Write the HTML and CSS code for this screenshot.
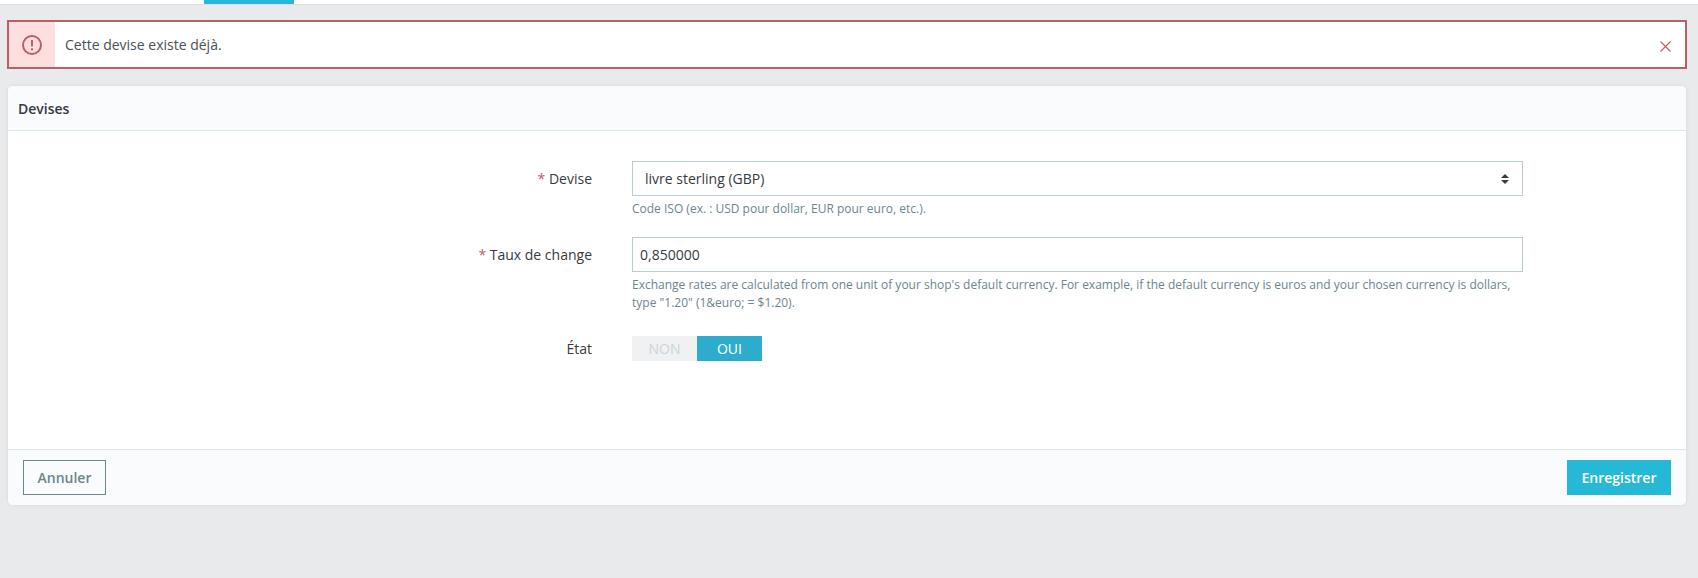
FILE: index.html
```html
<!DOCTYPE html>
<html lang="fr">
<head>
<meta charset="utf-8">
<title>Devises</title>
<link rel="stylesheet" href="styles.css">
</head>
<body>
<div class="topbar"><div class="tab"></div></div>
<main class="content">
  <div class="alert">
    <div class="alert-icon">
      <svg width="20" height="20" viewBox="0 0 20 20"><circle cx="10" cy="10" r="9" fill="none" stroke="#c05c67" stroke-width="2"/><path d="M10 5v6.5" stroke="#c05c67" stroke-width="2" fill="none"/><path d="M10 13.2v2" stroke="#c05c67" stroke-width="2" fill="none"/></svg>
    </div>
    <div class="alert-text">Cette devise existe déjà.</div>
    <svg class="alert-close" width="11" height="11" viewBox="0 0 11 11"><path d="M.5.5l10 10M10.500.5l-10 10" stroke="#c05c67" stroke-width="1.100" fill="none"/></svg>
  </div>
  <section class="card">
    <header class="card-head">Devises</header>
    <div class="card-body">
      <div class="row">
        <div class="label"><span class="req">*</span> Devise</div>
        <div class="field">
          <div class="control control-select"><span>livre sterling (GBP)</span>
            <svg width="8" height="10" viewBox="0 0 8 10"><path d="M4 0l4 4H0zM4 10L0 6h8z" fill="#363a41"/></svg>
          </div>
          <p class="hint">Code ISO (ex. : USD pour dollar, EUR pour euro, etc.).</p>
        </div>
      </div>
      <div class="row">
        <div class="label"><span class="req">*</span> Taux de change</div>
        <div class="field">
          <div class="control">0,850000</div>
          <p class="hint">Exchange rates are calculated from one unit of your shop's default currency. For example, if the default currency is euros and your chosen currency is dollars, type "1.20" (1&amp;euro; = $1.20).</p>
        </div>
      </div>
      <div class="row row-state">
        <div class="label">État</div>
        <div class="field">
          <div class="switch"><span class="off">NON</span><span class="on">OUI</span></div>
        </div>
      </div>
    </div>
    <footer class="card-foot">
      <button class="btn btn-cancel">Annuler</button>
      <button class="btn btn-save">Enregistrer</button>
    </footer>
  </section>
</main>
</body>
</html>
```
FILE: styles.css
```css
* { box-sizing: border-box; }
html, body { margin: 0; height: 100%; }
body {
  background: #e9eaec;
  font-family: "Open Sans", "Liberation Sans", sans-serif;
  font-size: 14px;
  color: #363a41;
  overflow: hidden;
}
.topbar {
  height: 5px;
  background: #fff;
  border-bottom: 1px solid #dcdedf;
  padding-left: 204px;
}
.tab { width: 90px; height: 4px; background: #25b9d7; }
.content { padding: 15px 11px 0 7px; }
.alert {
  height: 49px;
  background: #fff;
  border: 2px solid #c05c67;
  display: flex;
  align-items: center;
}
.alert-icon {
  width: 46px;
  height: 100%;
  background: #fddfe0;
  display: flex;
  align-items: center;
  justify-content: center;
}
.alert-text { margin-left: 10px; flex: 1; color: #4a5059; }
.alert-close { margin: 3px 14px 0 0; }
.card {
  margin: 17px 1px 0;
  background: #fff;
  border-radius: 5px;
  box-shadow: 0 0 4px rgba(0, 0, 0, .08);
  overflow: hidden;
}
.card-head {
  height: 45px;
  background: #fafbfc;
  border-bottom: 1px solid #dbe6e9;
  padding: 0 10px;
  display: flex;
  align-items: center;
  font-weight: 600;
  font-size: 14px;
}
.card-body { height: 318px; padding-top: 30px; }
.row { display: flex; margin-bottom: 19px; }
.label {
  width: 584px;
  text-align: right;
  padding-top: 8px;
  line-height: 19px;
  color: #363a41;
}
.req { color: #c05c67; }
.field { width: 891px; margin-left: 40px; }
.control {
  height: 35px;
  border: 1px solid #bbcdd2;
  padding: 0 11px 0 7px;
  display: flex;
  align-items: center;
  justify-content: space-between;
  color: #363a41;
}
.control-select { padding-left: 12px; padding-right: 13px; }
.hint {
  margin: 4px 0 0;
  font-size: 12px;
  line-height: 18px;
  color: #6c868e;
}
.row-state { margin-top: 24px; }
.row-state .label { padding-top: 3px; }
.switch { display: flex; width: 130px; height: 25px; font-size: 14px; }
.switch span { flex: 1; display: flex; align-items: center; justify-content: center; }
.off { background: #eff1f2; color: #cbd5d8; }
.on { background: #2eacce; color: #fff; }
.card-foot {
  height: 56px;
  background: #fafbfc;
  border-top: 1px solid #dbe3e8;
  padding: 10px 15px 0;
  display: flex;
  justify-content: space-between;
  align-items: flex-start;
}
.btn {
  height: 35px;
  font-family: inherit;
  font-size: 14px;
  font-weight: 600;
  padding: 0;
  border-radius: 0;
}
.btn-cancel {
  width: 83px;
  background: transparent;
  border: 1px solid #6c868e;
  color: #6c868e;
}
.btn-save {
  width: 104px;
  background: #25b9d7;
  border: 0;
  color: #fff;
}
```
